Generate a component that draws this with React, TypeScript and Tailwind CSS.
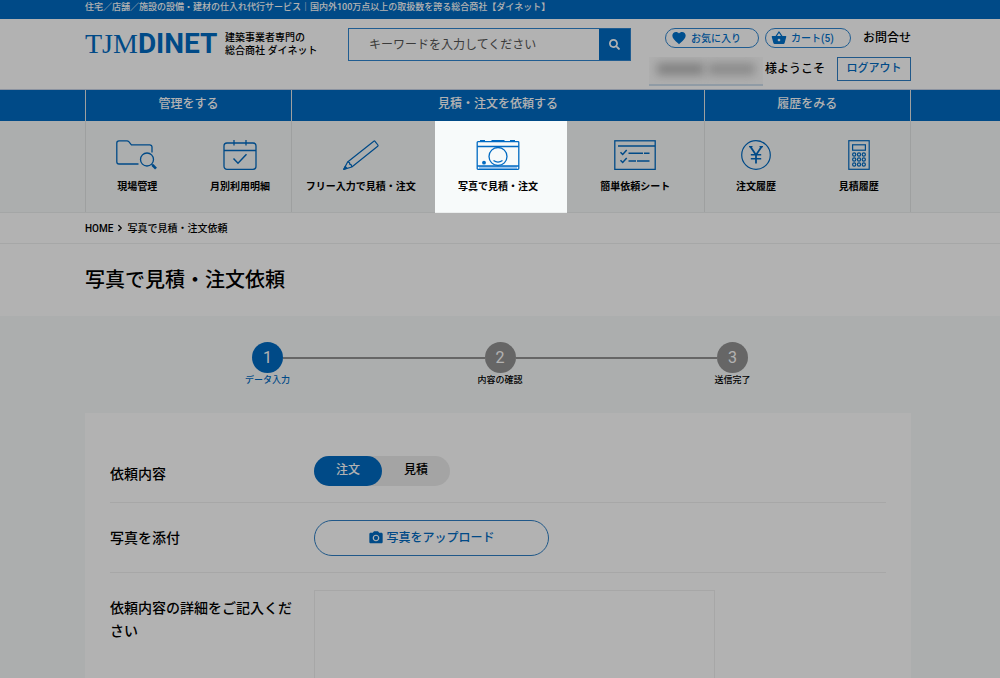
import React, { useState } from 'react';
import { FaSearch } from 'react-icons/fa';
import { MdCameraAlt, MdFavorite, MdShoppingBasket } from 'react-icons/md';
import { ChevronRight } from 'lucide-react';

const steps = ['データ入力', '内容の確認', '送信完了'];

export default function App() {
    return (
        <div className="min-h-screen overflow-hidden bg-white text-black font-[Roboto,'Noto_Sans_CJK_JP',sans-serif]">
            <div className="bg-[#006ac2] text-white">
                <Container>
                    <p className="h-[19px] text-[9px] leading-[14px] font-medium whitespace-nowrap">
                        住宅／店舗／施設の設備・建材の仕入れ代行サービス｜国内外100万点以上の取扱数を誇る総合商社【ダイネット】
                    </p>
                </Container>
            </div>
            <Header />
            <GlobalNav />

            <nav aria-label="パンくず" className="border-b border-[#eeefef]">
                <Container>
                    <ol className="flex h-[30px] items-center gap-0.5 text-[10px] font-medium">
                        <li><a href="#">HOME</a></li>
                        <li><ChevronRight className="h-2.5 w-2.5" strokeWidth={3} /></li>
                        <li>写真で見積・注文依頼</li>
                    </ol>
                </Container>
            </nav>

            <Container>
                <h1 className="flex h-[72px] items-center text-[20px] font-medium">写真で見積・注文依頼</h1>
            </Container>

            <main className="bg-[#f7fafa] pt-[26px]">
                <Container>
                    <Steps current={0} />
                    <RequestForm />
                </Container>
            </main>
        </div>
    );
}

function Container({ children }: { children: React.ReactNode }) {
    return <div className="mx-auto w-full max-w-[830px] pr-1">{children}</div>;
}

function Header() {
    return (
        <header className="border-b border-[#c9d3e6]">
            <Container>
                <div className="flex h-[70px] items-start pt-[9px]">
                    <a href="#" className="flex h-8 w-[263px] shrink-0 items-center gap-2 whitespace-nowrap">
                        <span className="flex w-[132px] items-baseline justify-between leading-8 text-[#006ac2]">
                            <span className="text-[28px] font-['Liberation_Serif',serif]">TJM</span>
                            <span className="text-[28px] font-bold">DINET</span>
                        </span>
                        <span className="text-[10px] leading-[13px] font-medium">
                            建築事業者専門の<br />総合商社 ダイネット
                        </span>
                    </a>

                    <form className="flex h-[33px] w-[283px] border border-[#2f86d0]" onSubmit={(e) => e.preventDefault()}>
                        <input
                            type="text"
                            aria-label="キーワード"
                            placeholder="キーワードを入力してください"
                            className="min-w-0 flex-1 pl-5 text-[12px] outline-none placeholder:text-[#555]"
                        />
                        <button type="submit" aria-label="検索" className="flex w-[31px] items-center justify-center bg-[#006ac2] text-white">
                            <FaSearch className="h-[11px] w-[11px]" />
                        </button>
                    </form>

                    <div className="ml-auto flex flex-col items-end gap-[9px] whitespace-nowrap font-medium">
                        <div className="flex h-5 items-center">
                            <a href="#" className="flex h-5 w-[94px] items-center gap-1 rounded-full border border-[#2f86d0] pl-[5px] text-[10px] text-[#0071cc]">
                                <MdFavorite className="h-4 w-4" />お気に入り
                            </a>
                            <a href="#" className="ml-1.5 flex h-5 w-[86px] items-center gap-1 rounded-full border border-[#2f86d0] pl-[5px] text-[10px] text-[#0071cc]">
                                <MdShoppingBasket className="h-4 w-4" />カート(5)
                            </a>
                            <a href="#" className="ml-3 text-[12px]">お問合せ</a>
                        </div>
                        <div className="flex h-[29px] items-start">
                            <div className="mr-0.5 flex h-[29px] w-[114px] items-center gap-1 overflow-hidden border-b-2 border-[#cfdeec] bg-[#fafafa] px-2 pb-1">
                                <span className="h-3 w-12 bg-[#b8b8b8] blur-[5px]" />
                                <span className="h-3 w-12 bg-[#c6c6c6] blur-[5px]" />
                            </div>
                            <span className="mr-3 text-[12px] leading-6">様ようこそ</span>
                            <button type="button" className="h-6 w-[74px] border border-[#2f7fc4] text-[11px] text-[#006ac2]">ログアウト</button>
                        </div>
                    </div>
                </div>
            </Container>
        </header>
    );
}

function GlobalNav() {
    return (
        <nav className="bg-[linear-gradient(#006ac2_31px,#f7fafa_31px)] border-b border-[#ebeeee]">
            <Container>
                <div className="grid grid-cols-[1fr_2fr_1fr] border-r border-[#e3e6e6]">
                    <NavGroup title="管理をする">
                        <NavItem label="現場管理" icon={<FolderIcon />} />
                        <NavItem label="月別利用明細" icon={<CalendarIcon />} />
                    </NavGroup>
                    <NavGroup title="見積・注文を依頼する">
                        <NavItem label="フリー入力で見積・注文" icon={<PencilIcon />} />
                        <NavItem label="写真で見積・注文" icon={<CameraIcon />} spotlight />
                        <NavItem label="簡単依頼シート" icon={<SheetIcon />} />
                    </NavGroup>
                    <NavGroup title="履歴をみる">
                        <NavItem label="注文履歴" icon={<YenIcon />} />
                        <NavItem label="見積履歴" icon={<CalculatorIcon />} />
                    </NavGroup>
                </div>
            </Container>
        </nav>
    );
}

function NavGroup({ title, children }: { title: string, children: React.ReactNode }) {
    return (
        <section className="border-l border-[#e3e6e6]">
            <h2 className="h-[31px] text-center text-[12px] leading-7 font-medium text-white">{title}</h2>
            <ul className="flex">{children}</ul>
        </section>
    );
}

function NavItem({ label, icon, spotlight }: { label: string, icon: React.ReactNode, spotlight?: boolean }) {
    return (
        <li className="relative flex-1 basis-0">
            <a href="#" className="flex h-[91px] flex-col items-center gap-[9px] pt-[19px] text-[#006ac2]">
                {icon}
                <span className="text-[10px] leading-4 font-bold whitespace-nowrap text-black">{label}</span>
            </a>
            {/* dims everything outside the highlighted item */}
            {spotlight && (
                <span className="pointer-events-none absolute top-0 right-0 -bottom-px left-1.5 z-10 shadow-[0_0_0_200vmax_rgba(0,0,0,0.3)]" />
            )}
        </li>
    );
}

function Steps({ current }: { current: number }) {
    return (
        <ol className="mx-auto flex max-w-[500px] items-start pl-1">
            {steps.map((label, i) => (
                <React.Fragment key={label}>
                    {i > 0 && <li aria-hidden="true" className="mt-[15px] h-0.5 flex-1 bg-[#929292]" />}
                    <li className={i === current ? 'flex h-[71px] w-[31px] flex-col items-center text-[#006ac2]' : 'flex h-[71px] w-[31px] flex-col items-center'}>
                        <span className={i === current
                            ? 'h-[31px] w-[31px] rounded-full bg-[#006ac2] text-center text-[16px] leading-[31px] text-white'
                            : 'h-[31px] w-[31px] rounded-full bg-[#929292] text-center text-[16px] leading-[31px] text-white'}
                        >
                            {i + 1}
                        </span>
                        <span className="text-[9px] leading-[14px] font-medium whitespace-nowrap">{label}</span>
                    </li>
                </React.Fragment>
            ))}
        </ol>
    );
}

function RequestForm() {
    const [kind, setKind] = useState('注文');

    return (
        <form className="bg-white px-[25px] pt-[26px]">
            <div className="flex border-b border-[#f0f0f0] pt-[17px] pb-4">
                <span id="kind" className="w-[204px] shrink-0 pt-[7px] text-[14px] leading-[23px] font-medium">依頼内容</span>
                <div role="radiogroup" aria-labelledby="kind" className="flex h-[30px] w-[136px] rounded-full bg-[#ebebeb]">
                    {['注文', '見積'].map((option) => (
                        <label
                            key={option}
                            className="relative flex-1 cursor-pointer rounded-full text-center text-[12px] leading-7 font-medium has-checked:bg-[#006ac2] has-checked:text-white"
                        >
                            <input
                                type="radio"
                                name="kind"
                                className="sr-only"
                                checked={kind === option}
                                onChange={() => setKind(option)}
                            />
                            {option}
                        </label>
                    ))}
                </div>
            </div>

            <div className="flex border-b border-[#f0f0f0] pt-[17px] pb-4">
                <span className="w-[204px] shrink-0 pt-[7px] text-[14px] leading-[23px] font-medium">写真を添付</span>
                <button type="button" className="flex h-9 w-[235px] items-center justify-center gap-0.5 rounded-full border border-[#2f7fc4] text-[12px] font-medium text-[#006ac2]">
                    <MdCameraAlt className="h-4 w-4" />写真をアップロード
                </button>
            </div>

            <div className="flex pt-[17px]">
                <label htmlFor="detail" className="w-[204px] shrink-0 pt-[7px] pr-4 text-[14px] leading-[23px] font-medium">
                    依頼内容の詳細をご記入ください
                </label>
                <textarea id="detail" rows={8} className="w-full max-w-[401px] resize-none border border-[#efefef] p-3 text-[12px] outline-none" />
            </div>
        </form>
    );
}

function FolderIcon() {
    return (
        <svg width="42" height="30" viewBox="0 0 42 30" fill="none" stroke="currentColor" strokeWidth="1.3">
            <path d="M22.5 24H3a2.2 2.2 0 0 1-2.2-2.2V3A2.2 2.2 0 0 1 3 .8h8c.8 0 1.3.3 1.8.9l2.6 3.1h18.4a2.2 2.2 0 0 1 2.2 2.2v5.5" />
            <circle cx="31" cy="19.5" r="6.5" />
            <path d="m35.6 24.2 1.5 1.5" />
            <path d="m36.5 25 3.5 3.6" strokeWidth="2.6" />
        </svg>
    );
}

function CalendarIcon() {
    return (
        <svg width="34" height="30" viewBox="0 0 34 30" fill="none" stroke="currentColor" strokeWidth="1.3">
            <rect x="1" y="3" width="32" height="26.3" rx="3" />
            <path d="M1 10.5h32M11 0v5.5M23 0v5.5" />
            <path d="m10.5 18.5 4.500 4.7 8.5-9" strokeWidth="1.5" />
        </svg>
    );
}

function PencilIcon() {
    return (
        <svg width="36" height="30" viewBox="0 0 36 30" fill="none" stroke="currentColor" strokeWidth="1.2" strokeLinejoin="round">
            <path d="M.8 29.3 4.600 22 30.8 1.2c.4-.3.9-.3 1.2.1l2.9 3.7c.3.4.2.9-.2 1.2L8.8 27z" />
            <path d="M4.600 22c2 0 2.3.8 2 2.2 1.3 0 2 .9 2.2 2.8" />
            <path d="m.8 29.3 1.5-3 1.6 2z" fill="currentColor" />
        </svg>
    );
}

function CameraIcon() {
    return (
        <svg width="44" height="30" viewBox="0 0 44 30" fill="none" stroke="currentColor" strokeWidth="1.3">
            <rect x="3" y="26" width="38" height="3" fill="#9cc7ee" stroke="none" />
            <rect x="1.2" y="1.7" width="41.6" height="27.6" rx=".8" />
            <path d="M1.2 6.5h41.6M1.2 26h41.6" />
            <path d="M4 .8h5M15.500 .8h13M34 .8h5" strokeWidth="1.6" />
            <circle cx="22" cy="16.5" r="9" fill="#f7fafa" />
            <path d="M17.5 20.5c2.8 2 6.2 2 9 0" />
            <circle cx="8" cy="22.7" r="1.9" fill="currentColor" stroke="none" />
        </svg>
    );
}

function SheetIcon() {
    return (
        <svg width="42" height="30" viewBox="0 0 42 30" fill="none" stroke="currentColor" strokeWidth="1.3">
            <rect x=".8" y=".8" width="40.4" height="28.6" />
            <path d="M4 6h37" strokeWidth="1.6" />
            <path d="m6.5 12.3 2.2 2.2 4-4.5M6.5 20.3l2.2 2.2 4-4.5" strokeWidth="1.5" />
            <path d="M14.5 13.2H29M30 13.2h5.5M14.5 21H22M23 21h12.5" strokeWidth="1.5" />
        </svg>
    );
}

function YenIcon() {
    return (
        <svg width="30" height="30" viewBox="0 0 30 30" fill="none" stroke="currentColor" strokeWidth="1.2">
            <circle cx="15" cy="15" r="14.3" />
            <path d="m9.3 6.5 5.7 8.500 5.7-8.500M15 15v8.500" strokeWidth="1.8" />
            <path d="M9.8 14.8h10.4M9.8 18.8h10.4" strokeWidth="1.4" />
            <path d="M8 6.6h3.5M18.5 6.6H22" />
        </svg>
    );
}

function CalculatorIcon() {
    return (
        <svg width="22" height="30" viewBox="0 0 22 30" fill="none" stroke="currentColor" strokeWidth="1.2">
            <rect x=".8" y=".7" width="20.4" height="28.6" />
            <rect x="4.6" y="4.8" width="12.8" height="5.4" />
            {[14.5, 19.5, 24.5].map((y) => [6.2, 11, 15.8].map((x) => (
                <circle key={`${x}-${y}`} cx={x} cy={y} r="1.6" />
            )))}
        </svg>
    );
}
